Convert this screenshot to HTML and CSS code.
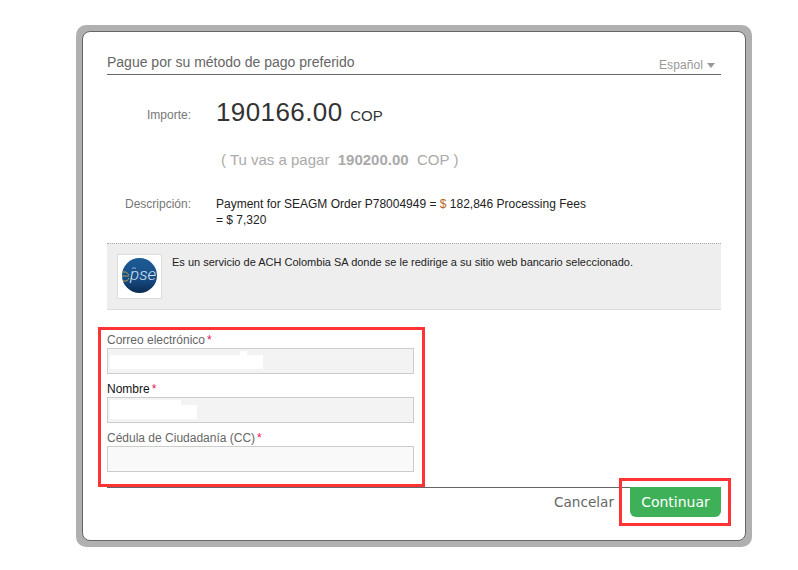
FILE: index.html
```html
<!DOCTYPE html>
<html lang="es">
<head>
<meta charset="utf-8">
<title>Pago</title>
<link rel="stylesheet" href="styles.css">
</head>
<body>
<div class="frame">
  <main class="card">
    <header class="head">
      <h1 class="title">Pague por su método de pago preferido</h1>
      <div class="lang">Español<span class="caret"></span></div>
    </header>
    <div class="row row-amount">
      <div class="label label-amount">Importe:</div>
      <div class="amount">190166.00 <span class="cur">COP</span></div>
    </div>
    <div class="row row-pay">
      <div></div>
      <div class="pay">( Tu vas a pagar&nbsp; <b>190200.00</b>&nbsp; COP )</div>
    </div>
    <div class="row row-desc">
      <div class="label label-desc">Descripción:</div>
      <div class="desc">Payment for SEAGM Order P78004949 = <span class="dollar">$</span> 182,846 Processing Fees<br>= $ 7,320</div>
    </div>
    <section class="info">
      <div class="logo">
        <svg width="43" height="43" viewBox="0 0 43 43">
          <defs>
            <linearGradient id="g" x1="0" y1="0" x2="0" y2="1">
              <stop offset="0" stop-color="#1d5a94"/>
              <stop offset="0.55" stop-color="#17508a"/>
              <stop offset="1" stop-color="#0b2a52"/>
            </linearGradient>
          </defs>
          <circle cx="21.5" cy="20.5" r="17.5" fill="url(#g)"/>
          <path d="M4 17h4l3 3M4 21h7M5 26h4l2-3" fill="none" stroke="#c9a640" stroke-width="0.9"/>
          <path d="M14 13.5q2-1.5 4 0" fill="none" stroke="#c9d8e8" stroke-width="0.7"/>
          <text x="12" y="25" class="logo-text">pse</text>
        </svg>
      </div>
      <p class="info-text">Es un servicio de ACH Colombia SA donde se le redirige a su sitio web bancario seleccionado.</p>
    </section>
    <form class="form">
      <div class="field">
        <label class="flabel">Correo electrónico<span class="req">*</span></label>
        <div class="input input-filled">
          <span class="mask m1a"></span><span class="mask m1b"></span>
        </div>
      </div>
      <div class="field">
        <label class="flabel flabel-dark">Nombre<span class="req">*</span></label>
        <div class="input input-filled">
          <span class="mask m2a"></span><span class="mask m2b"></span>
        </div>
      </div>
      <div class="field">
        <label class="flabel">Cédula de Ciudadanía (CC)<span class="req">*</span></label>
        <div class="input"></div>
      </div>
    </form>
    <footer class="foot">
      <a class="cancel">Cancelar</a>
      <button class="go" type="button">Continuar</button>
    </footer>
  </main>
</div>
<div class="mark mark-form"></div>
<div class="mark mark-btn"></div>
</body>
</html>
```
FILE: styles.css
```css
* { box-sizing: border-box; }
html, body { margin: 0; height: 100%; background: #fff; }
body {
  padding: 25px 0 0 76px;
  font-family: "Liberation Sans", Arial, sans-serif;
  overflow: hidden;
  position: relative;
}
.frame {
  width: 676px;
  padding: 6px;
  background: #b0b0b0;
  border-radius: 10px;
}
.card {
  height: 510px;
  padding: 0 24px;
  background: #fff;
  border: 1px solid #666;
  border-radius: 8px;
}
.head {
  height: 43px;
  display: flex;
  justify-content: space-between;
  align-items: flex-end;
  border-bottom: 1px solid #666;
}
.title {
  margin: 0 0 4px;
  font-size: 14px;
  line-height: 16px;
  font-weight: 400;
  color: #666;
}
.lang {
  display: flex;
  align-items: center;
  margin-bottom: 2px;
  font-size: 12px;
  line-height: 14px;
  letter-spacing: 0.1px;
  color: #999;
}
.caret {
  width: 0;
  height: 0;
  margin: 1px 6px 0 4px;
  border-left: 4.5px solid transparent;
  border-right: 4.5px solid transparent;
  border-top: 5px solid #999;
}
.row {
  display: grid;
  grid-template-columns: 84px 1fr;
  column-gap: 25px;
}
.row-amount { margin-top: 23px; height: 28px; }
.label { font-size: 12px; line-height: 14px; color: #777; text-align: right; }
.label-amount { padding-top: 10px; }
.label-desc { padding-top: 1px; }
.amount { font-size: 26px; line-height: 28px; letter-spacing: 0.4px; color: #333; }
.cur { font-size: 15px; letter-spacing: 0; }
.row-pay { margin-top: 24px; }
.pay {
  padding-left: 5px;
  font-size: 15px;
  line-height: 20px;
  color: #aaa;
}
.row-desc { margin-top: 26px; }
.desc { width: 380px; font-size: 12px; line-height: 16px; color: #222; }
.dollar { color: #b5651d; }
.info {
  margin-top: 15px;
  height: 67px;
  display: flex;
  gap: 10px;
  padding: 10px;
  background: #eee;
  border-top: 1px dotted #aaa;
  border-bottom: 1px solid #ddd;
}
.logo {
  flex: none;
  width: 45px;
  height: 45px;
  background: #fff;
  border: 1px solid #ddd;
}
.logo svg { display: block; }
.logo-text {
  font-family: Roboto, "Liberation Sans", sans-serif;
  font-size: 17px;
  font-weight: 300;
  font-style: italic;
  fill: #d5e0ec;
}
.info-text { margin: 2px 0 0; font-size: 11px; line-height: 13px; color: #222; }
.form { margin-top: 22px; width: 307px; }
.field { height: 49px; }
.flabel {
  display: block;
  height: 16px;
  font-size: 12px;
  line-height: 16px;
  color: #666;
}
.flabel-dark { color: #111; }
.req { margin-left: 2px; color: #f0145a; }
.input {
  position: relative;
  height: 26px;
  background: #f9f9f9;
  border: 1px solid #ccc;
}
.input-filled { background: #f3f3f3; }
.mask { position: absolute; background: #fff; }
.m1a { left: 2px; top: 6px; width: 153px; height: 14px; }
.m1b { left: 132px; top: 2px; width: 7px; height: 4px; }
.m2a { left: 2px; top: 7px; width: 87px; height: 14px; }
.m2b { left: 2px; top: 2px; width: 71px; height: 5px; }
.foot {
  margin-top: 8px;
  display: flex;
  justify-content: flex-end;
  align-items: flex-start;
  gap: 16px;
  border-top: 1px solid #666;
}
.cancel {
  font-family: "DejaVu Sans", Verdana, sans-serif;
  font-size: 13.6px;
  line-height: 29px;
  color: #666;
}
.go {
  width: 91px;
  height: 30px;
  margin-top: -1px;
  padding: 0;
  border: 0;
  border-radius: 0 0 6px 6px;
  background: #3eb058;
  color: #fff;
  font-family: "DejaVu Sans", Verdana, sans-serif;
  font-size: 14px;
}
.mark { position: absolute; border: 3px solid #f33; }
.mark-form { left: 98px; top: 327px; width: 327px; height: 160px; }
.mark-btn { left: 619px; top: 478px; width: 112px; height: 48px; }
```
